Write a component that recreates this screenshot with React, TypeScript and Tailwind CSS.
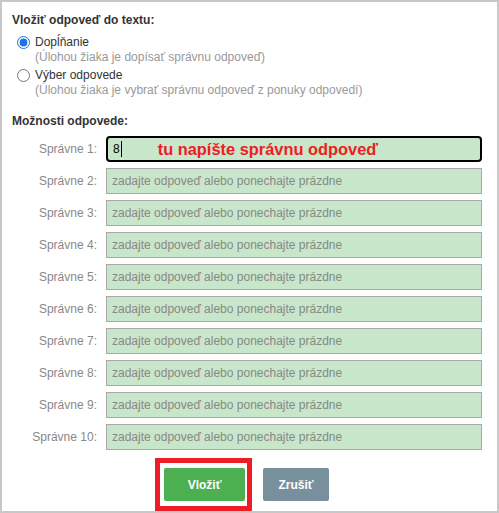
const rows = [2, 3, 4, 5, 6, 7, 8, 9, 10];

function Label({ n }: { n: number }) {
  return (
    <div className="w-[85px] shrink-0 text-right text-[12px] text-[#888]">
      Správne {n}:
    </div>
  );
}

export default function App() {
  return (
    <div
      className="flex h-[513px] w-[499px] flex-col border-2 border-[#c8c8c8] bg-white pt-[10px] text-[#333]"
      style={{ fontFamily: '"Liberation Sans", Arial, sans-serif' }}
    >
      <div className="pl-[10px] text-[12px] leading-4 font-bold">
        Vložiť odpoveď do textu:
      </div>

      <div className="mt-[6px] flex flex-col pl-[15px]">
        <label className="flex items-center gap-[5px] text-[12px] leading-4">
          <input
            type="radio"
            name="mode"
            defaultChecked
            className="m-0 h-[13px] w-[13px] accent-[#1a73e8]"
          />
          Dopĺňanie
        </label>
        <div className="pl-[18px] text-[12px] leading-[15px] text-[#999]">
          (Úlohou žiaka je dopísať správnu odpoveď)
        </div>
        <label className="mt-[2px] flex items-center gap-[5px] text-[12px] leading-4">
          <input type="radio" name="mode" className="m-0 h-[13px] w-[13px]" />
          Výber odpovede
        </label>
        <div className="pl-[18px] text-[12px] leading-[15px] text-[#999]">
          (Úlohou žiaka je vybrať správnu odpoveď z ponuky odpovedí)
        </div>
      </div>

      <div className="mt-[15px] pl-[10px] text-[12px] leading-4 font-bold">
        Možnosti odpovede:
      </div>

      <div className="mt-[7px] flex flex-col gap-[6px] pl-[10px]">
        <div className="flex items-center gap-[9px]">
          <Label n={1} />
          <div className="flex h-[26px] w-[376px] items-center rounded-[4px] border-2 border-black bg-[#c8e6c9] pl-[5px] text-[12px]">
            <span className="text-black">8</span>
            <span className="ml-px h-[16px] w-px bg-black" />
            <span className="ml-[36px] text-[16.4px] font-bold text-[#ee1c25]">
              tu napíšte správnu odpoveď
            </span>
          </div>
        </div>
        {rows.map((n) => (
          <div key={n} className="flex items-center gap-[9px]">
            <Label n={n} />
            <input
              type="text"
              placeholder="zadajte odpoveď alebo ponechajte prázdne"
              className="h-[26px] w-[376px] border border-[#a9a9a9] bg-[#c8e6c9] px-[5px] text-[12px] outline-none placeholder:text-[#888]"
            />
          </div>
        ))}
      </div>

      <div className="mt-[8px] flex items-start pl-[153px]">
        <div className="border-[5px] border-[#ee1c25] py-[5px] pr-[2px] pl-[4px]">
          <button className="h-[33px] w-[81px] rounded-[2px] bg-[#4caf50] text-[12px] font-bold text-white">
            Vložiť
          </button>
        </div>
        <button className="mt-[10px] ml-[11px] h-[33px] w-[66px] rounded-[2px] bg-[#78909c] text-[12px] font-bold text-white">
          Zrušiť
        </button>
      </div>
    </div>
  );
}
